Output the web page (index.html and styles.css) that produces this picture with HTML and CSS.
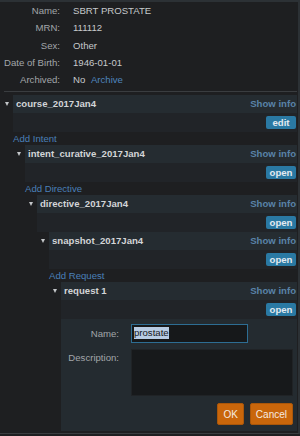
FILE: index.html
```html
<!DOCTYPE html>
<html>
<head>
<meta charset="utf-8">
<link rel="stylesheet" href="styles.css">
</head>
<body>
<div class="frame">
  <div class="patient">
    <span class="lbl">Name:</span><span class="val">SBRT PROSTATE</span>
    <span class="lbl">MRN:</span><span class="val">111112</span>
    <span class="lbl">Sex:</span><span class="val">Other</span>
    <span class="lbl">Date of Birth:</span><span class="val">1946-01-01</span>
    <span class="lbl">Archived:</span><span class="val">No <a class="link">Archive</a></span>
  </div>
  <div class="sep"></div>
  <div class="tree">
    <div class="item">
      <span class="tri"></span>
      <div class="content">
        <div class="panel">
          <div class="head"><span class="name">course_2017Jan4</span><a class="info">Show info</a></div>
          <div class="body"><button class="btn">edit</button></div>
        </div>
        <a class="add">Add Intent</a>
        <div class="item">
          <span class="tri"></span>
          <div class="content">
            <div class="panel">
              <div class="head"><span class="name">intent_curative_2017Jan4</span><a class="info">Show info</a></div>
              <div class="body"><button class="btn">open</button></div>
            </div>
            <a class="add">Add Directive</a>
            <div class="item">
              <span class="tri"></span>
              <div class="content">
                <div class="panel">
                  <div class="head"><span class="name">directive_2017Jan4</span><a class="info">Show info</a></div>
                  <div class="body"><button class="btn">open</button></div>
                </div>
                <div class="item">
                  <span class="tri"></span>
                  <div class="content">
                    <div class="panel">
                      <div class="head"><span class="name">snapshot_2017Jan4</span><a class="info">Show info</a></div>
                      <div class="body"><button class="btn">open</button></div>
                    </div>
                    <a class="add">Add Request</a>
                    <div class="item">
                      <span class="tri"></span>
                      <div class="content">
                        <div class="panel">
                          <div class="head"><span class="name">request 1</span><a class="info">Show info</a></div>
                          <div class="body"><button class="btn">open</button></div>
                          <div class="form">
                            <span class="flbl mid">Name:</span>
                            <div class="input"><span class="sel">prostate</span></div>
                            <span class="flbl">Description:</span>
                            <div class="textarea"></div>
                            <div class="actions">
                              <button class="obtn">OK</button>
                              <button class="obtn">Cancel</button>
                            </div>
                          </div>
                        </div>
                      </div>
                    </div>
                  </div>
                </div>
              </div>
            </div>
          </div>
        </div>
      </div>
    </div>
  </div>
</div>
</body>
</html>
```

FILE: styles.css
```css
html, body {
  margin: 0;
  padding: 0;
  background: #1e1f21;
}
body {
  font-family: "Liberation Sans", Arial, sans-serif;
  font-size: 9.6px;
}
.frame {
  width: 300px;
  height: 434px;
  box-sizing: border-box;
  border-top: 2px solid #2c3135;
  border-right: 2px solid #2c3135;
  border-bottom: 1px solid #3a3d40;
  overflow: hidden;
}
.patient {
  display: grid;
  grid-template-columns: 60px 1fr;
  column-gap: 13px;
  line-height: 17.25px;
}
.lbl {
  text-align: right;
  color: #a2a6aa;
  white-space: nowrap;
}
.val {
  color: #c6c9cc;
}
.link {
  color: #4e85bf;
  margin-left: 3px;
}
.sep {
  margin: 2.75px 1px 0 4px;
  height: 1px;
  background: #3a3d40;
}
.tree {
  padding: 3px 1px 0 1px;
}
.item {
  display: grid;
  grid-template-columns: 12px 1fr;
}
.tri {
  align-self: start;
  justify-self: start;
  width: 0;
  height: 0;
  margin: 7px 0 0 4px;
  border-left: 2.5px solid transparent;
  border-right: 2.5px solid transparent;
  border-top: 4px solid #c3c6c9;
}
.content {
  min-width: 0;
}
.head {
  display: flex;
  justify-content: space-between;
  height: 18px;
  line-height: 18px;
  background: #252c31;
  padding: 0 1px 0 3px;
}
.name {
  font-weight: bold;
  color: #d3d5d7;
}
.info {
  font-weight: bold;
  color: #5a83a8;
}
.body {
  display: flex;
  justify-content: flex-end;
  align-items: flex-start;
  box-sizing: border-box;
  height: 19px;
  padding: 3px 1px 0 0;
  background: #212428;
}
.btn {
  width: 30px;
  height: 13px;
  padding: 0;
  border: 0;
  border-radius: 2px;
  background: #2a79a3;
  color: #e2eaf0;
  font: bold 9.6px "Liberation Sans", Arial, sans-serif;
  line-height: 13px;
}
.add {
  display: block;
  height: 13px;
  line-height: 13px;
  color: #4a7fb8;
}
.form {
  display: grid;
  grid-template-columns: 58px 1fr;
  column-gap: 12px;
  row-gap: 6px;
  padding: 5px 4px 6px 0;
  background: #242b30;
}
.flbl {
  text-align: right;
  color: #a2a6aa;
  line-height: 18px;
}
.flbl.mid {
  line-height: 19px;
}
.input {
  width: 117px;
  height: 19px;
  box-sizing: border-box;
  border: 1px solid #2d6d93;
  background: #16181a;
  padding: 2px 0 0 2px;
}
.sel {
  display: inline-block;
  line-height: 12px;
  background: #b8cce4;
  color: #15171a;
}
.textarea {
  height: 47px;
  box-sizing: border-box;
  border: 1px solid #202326;
  background: #17191b;
}
.actions {
  grid-column: 2;
  display: flex;
  justify-content: flex-end;
  gap: 6px;
  margin-top: 1px;
}
.obtn {
  height: 22px;
  padding: 0 5px;
  border: 1px solid #a9560a;
  border-radius: 2px;
  background: #c9660b;
  color: #f6ebe0;
  font: 10px "Liberation Sans", Arial, sans-serif;
}
```
